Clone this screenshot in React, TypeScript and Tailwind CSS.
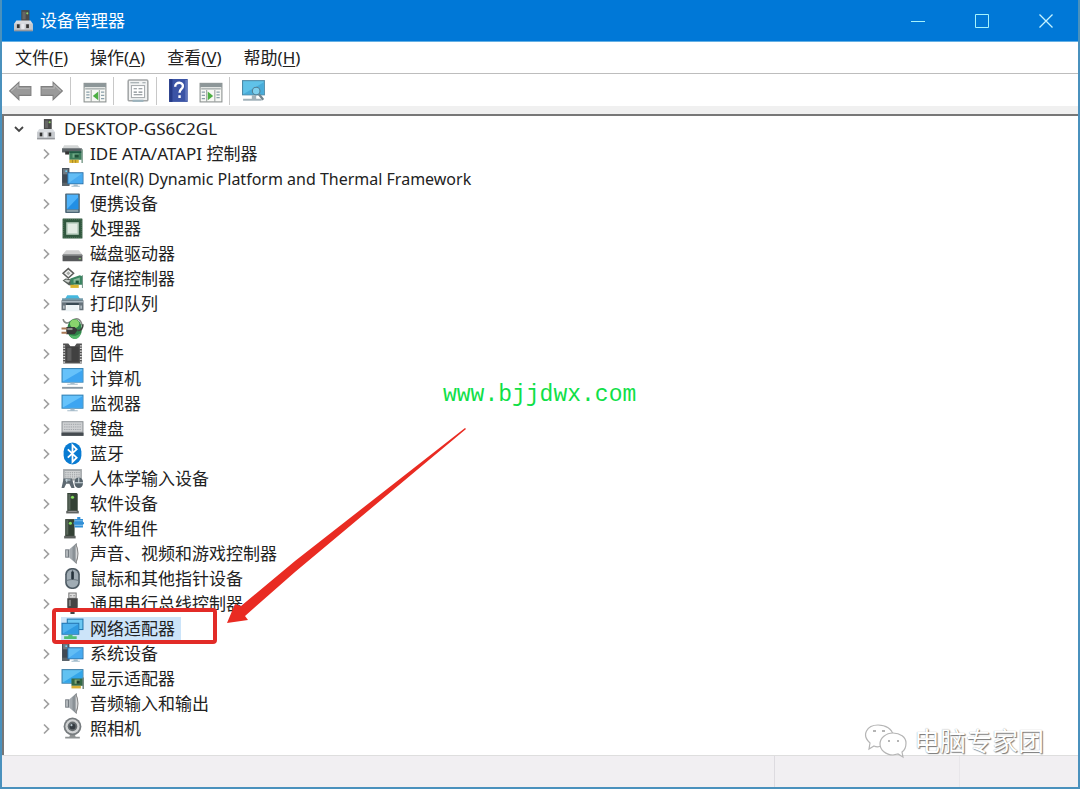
import type { ReactNode } from "react";

type Draw = () => ReactNode;

function Icon({ children, className = "size-[23px]" }: { children: ReactNode; className?: string }) {
  return (
    <svg viewBox="0 0 22 22" aria-hidden="true" className={`${className} shrink-0`}>
      {children}
    </svg>
  );
}

const Pc: Draw = () => (
  <>
    <rect x="8.5" y="1" width="7.5" height="12" fill="#4a4a4a" />
    <rect x="9.5" y="2.5" width="3" height="7" fill="#666" />
    <circle cx="14" cy="4" r="1" fill="#8fd06a" />
    <path d="M4 10.5h13l2 3v6.5H2v-6.5z" fill="#d9dce0" />
    <path d="M2 13.5h17v6.5H2z" fill="#c6c9cd" />
    <path d="M2 19h17v1.5H2z" fill="#97999d" />
    <rect x="4.5" y="14" width="2.5" height="3.5" fill="#333" />
    <rect x="13" y="14" width="2.5" height="3.5" fill="#333" />
    <rect x="8.5" y="13.5" width="3" height="5" fill="#e8eaee" />
  </>
);

const Card: Draw = () => (
  <>
    <path d="M3 3h13l3 4H1z" fill="#d3d6d6" />
    <path d="M1 6h19v4H1z" fill="#5b6266" />
    <path d="M4 9h4v3H4z" fill="#333" />
    <path d="M8 9h12v8H8z" fill="#3d7d5c" />
    <path d="M8 9h12v1.5H8z" fill="#205843" />
    <path d="M11 11h6v4h-6z" fill="#70a987" />
    <path d="M13 12h4v3h-4z" fill="#1f5038" />
    <path d="M8 17h9v3H8z" fill="#d9b22e" />
    <path d="M11 17v3M14 17v3" stroke="#8d7320" strokeWidth=".6" />
    <path d="M19.5 7H21v13h-1.5z" fill="#87a596" />
  </>
);

const Framework: Draw = () => (
  <>
    <rect x="1" y="1" width="7" height="17" fill="#404a54" />
    <rect x="2" y="2" width="5" height="5" fill="#6f7a83" />
    <circle cx="5" cy="4" r=".9" fill="#6ed0f4" />
    <path d="M1 15h7v3H1z" fill="#5b646a" />
    <rect x="6" y="5" width="15.5" height="11.5" fill="#2b6fa8" />
    <rect x="7" y="6" width="13.500" height="9.500" fill="#62bdf5" />
    <path d="M7 15.5 20.5 6v9.5z" fill="#48aaf0" />
    <path d="M12 16.5h4v1.5h2v1h-8v-1h2z" fill="#a3bccb" />
  </>
);

const Portable: Draw = () => (
  <>
    <rect x="4" y="1.5" width="14" height="18.5" rx=".8" fill="#4c6575" />
    <rect x="5.5" y="2.5" width="11" height="14" fill="#4db2fa" />
    <path d="M5.5 16.5 16.5 5v11.5z" fill="#228fe5" />
    <path d="M5.5 17h11v2h-11z" fill="#8ba0aa" />
  </>
);

const Cpu: Draw = () => (
  <>
    <rect x="1.5" y="1.5" width="19" height="19" rx=".5" fill="#31583f" />
    <rect x="2.5" y="2.5" width="17" height="17" fill="none" stroke="#5d8066" strokeWidth=".7" strokeDasharray="1 1" />
    <rect x="5" y="5" width="12" height="12" fill="#b9cfbf" />
    <rect x="6.5" y="6.5" width="9" height="9" fill="#e3ece4" />
  </>
);

const Disk: Draw = () => (
  <>
    <path d="M5 8h12l3.5 4h-19z" fill="#d1d1d1" />
    <rect x="1.5" y="12" width="19" height="6.5" rx=".6" fill="#56585a" />
    <path d="M2 12h18v1.2H2z" fill="#8c8e90" />
    <rect x="17" y="15.5" width="2" height="1" fill="#92d67a" />
  </>
);

const Storage: Draw = () => (
  <>
    <path d="m7 1.5 5 4.5-5 4.5L2 6z" fill="#f4f4f4" stroke="#5d5f5d" strokeWidth="1.5" />
    <path d="m7 4 2 2-2 2-2-2z" fill="#a6aaa6" />
    <path d="m1.500 13 3-2 6 1 2 6-5-.5z" fill="#555d58" />
    <path d="m3 13 2-1 4 1-2 2z" fill="#c8ceca" />
    <path d="M9 11l9-3 3 1v8H9z" fill="#3a8561" />
    <path d="m12 12 6-2v5h-6z" fill="#88b99b" />
    <path d="M14 13h3v3h-3z" fill="#1e563a" />
    <path d="M9 17h8v3H9z" fill="#dbb52f" />
    <path d="M20 8h1v12h-1z" fill="#78998a" />
  </>
);

const Printer: Draw = () => (
  <>
    <path d="M6 3h10l3 5H3z" fill="#45b8df" />
    <path d="M1 6h20v2.500H1z" fill="#7199a8" />
    <path d="M.5 8h21v9.500h-4v-5h-13v5h-4z" fill="#66727a" />
    <path d="M1 8.5h20V10H1z" fill="#a9b7bf" />
    <path d="M5 10.500h12v2H5z" fill="#394a54" />
    <path d="M6 12.500h10l1.500 6h-13z" fill="#edf4f6" />
    <path d="M2 13h1.500v3H2zM18.500 13H20v3h-1.500z" fill="#b7c2c8" />
  </>
);

const Battery: Draw = () => (
  <>
    <path d="M2 2c1 4 4 5 8 2 4-4 9-3 10 4" fill="none" stroke="#858985" strokeWidth="1.5" />
    <ellipse cx="13" cy="11.500" rx="7" ry="9.500" fill="#308449" />
    <ellipse cx="13" cy="6.500" rx="4.500" ry="4" fill="#89d46d" />
    <path d="M8 17c4 2 8 1 11-2-1 4-3 6-6 6-2 0-4-2-5-4z" fill="#55b86a" />
    <path d="M5 9.5h8l3 3-3 4H5z" fill="#373938" />
    <path d="M6 10.5h5v2H6z" fill="#8d908b" />
    <path d="M.5 10h5v2h-5zM.5 14h5v2h-5z" fill="#a97956" />
    <path d="M16 13c4 0 5-3 5-6" fill="none" stroke="#414541" strokeWidth="1.5" />
  </>
);

const Firmware: Draw = () => (
  <>
    <path d="M2 1.5h5l2 2.500h4l2-2.500h5v19H2z" fill="#515151" />
    <path d="M5 4.500h12V19H5z" fill="#414141" />
    <path d="M6 5.500h4V18H6z" fill="#5d5d5d" />
    <path d="M3 3v17M19 3v17" stroke="#ddd" strokeWidth="1.8" strokeDasharray="1.2 1.4" />
  </>
);

const Screen: Draw = () => (
  <>
    <rect x=".5" y="2.5" width="21" height="13.5" fill="#3382b5" />
    <rect x="1.5" y="3.5" width="19" height="11.5" fill="#66c2fa" />
    <path d="M1.5 15 20.5 4v11z" fill="#3da5f1" />
    <path d="M9 16h4v1.5h3v1H6v-1h3z" fill="#a7bdcb" />
  </>
);

const Computer: Draw = () => (
  <>
    <rect x=".5" y="1" width="21" height="14" fill="#3382b5" />
    <rect x="1.5" y="2" width="19" height="12" fill="#66c2fa" />
    <path d="M1.5 14 20.5 3v11z" fill="#3da5f1" />
    <path d="M9 15h4v1h3v1H6v-1h3z" fill="#a7bdcb" />
    <path d="M1 19h20v1.8H1z" fill="#8a9aa5" />
  </>
);

const Keyboard: Draw = () => (
  <>
    <rect x=".5" y="4" width="21" height="14" fill="#8e9397" />
    <rect x="1.5" y="5" width="19" height="9" fill="#cfd1d3" />
    <path d="M3 7h16M3 9.5h16M3 12h16" stroke="#969b9f" strokeWidth=".8" strokeDasharray="1.2 .9" />
    <path d="M.5 15h21v3H.5z" fill="#454b50" />
  </>
);

const Bluetooth: Draw = () => (
  <>
    <rect x="2.500" y=".5" width="17" height="21" rx="8.500" fill="#087bd2" />
    <path d="m6.5 7 8.5 8-4 4V3l4 4-8.5 8" fill="none" stroke="#fff" strokeWidth="1.7" />
  </>
);

const Hid: Draw = () => (
  <>
    <rect x="2" y="2" width="18" height="11" fill="#a2a7aa" />
    <path d="M3.5 4h15v7h-15z" fill="#d8dadb" />
    <path d="M4 5.5h14M4 7.5h14M4 9.5h14" stroke="#868b8e" strokeWidth=".8" strokeDasharray="1.3 .8" />
    <path d="M2.5 11h8L13 20h-3l-2-4H5l-2 4H.5z" fill="#5f6a72" />
    <path d="M4 12.5h5M5.5 11.5v3" stroke="#ccdce4" />
    <rect x="13" y="10" width="8" height="10" rx="4" fill="#57646c" />
    <path d="M17 10v5M13.5 15H21" stroke="#d0dae0" />
  </>
);

const Software: Draw = () => (
  <>
    <path d="M6 1h9l1 1v17H6z" fill="#334135" />
    <path d="M7 2h2v15H7z" fill="#59665a" />
    <circle cx="11" cy="5" r="1.5" fill="#84dd5d" />
    <path d="M5 18h12v2.5H5z" fill="#5e6260" />
    <path d="M7 18h8v1H7z" fill="#999" />
  </>
);

const Component: Draw = () => (
  <>
    <path d="M4 2h9v17H4z" fill="#334135" />
    <path d="M5 3h2v14H5z" fill="#59665a" />
    <circle cx="9" cy="6" r="1.5" fill="#84dd5d" />
    <path d="M3 18h11v2.5H3z" fill="#5e6260" />
    <path d="M13 2h2.500V0h3v2H21v3h1v2h-1v3h-8V7h-1V5h1z" fill="#318fd6" />
    <path d="M13 3.500h8M13 8h8" stroke="#7bbce9" />
  </>
);

const Speaker: Draw = () => (
  <>
    <path d="M4 7h4v8H4z" fill="#737a80" />
    <path d="m8 7 7-6v20l-7-6z" fill="#a3a9ae" />
    <path d="m11 5 4-4v20l-4-4z" fill="#8a9196" />
    <path d="M14 2c3 5 3 13 0 18" fill="#d6d8d9" stroke="#888" />
    <path d="M5 8h1.500v6H5z" fill="#c4c9cc" />
  </>
);

const Mouse: Draw = () => (
  <>
    <rect x="4" y="1" width="14" height="20" rx="6" fill="#4d5a63" />
    <rect x="5.5" y="2.5" width="11" height="17" rx="5" fill="#a0acb4" />
    <path d="M11 2v8M5.5 13q5.5-2 11 0" stroke="#6d7982" fill="none" />
    <rect x="9.8" y="4" width="2.5" height="8" rx="1.2" fill="#26333c" />
  </>
);

const Usb: Draw = () => (
  <>
    <path d="M7.5 1h7v5h-7z" fill="#dedede" stroke="#777" />
    <path d="M9 3h1v1H9zM12 3h1v1h-1z" fill="#555" />
    <path d="M6 6h10v8q0 3-3 4v3H9v-3q-3-1-3-4z" fill="#454545" />
    <path d="M7.5 7.5h2v6h-2z" fill="#818181" />
  </>
);

const Network: Draw = () => (
  <>
    <rect x="5.500" y="1.500" width="16" height="11" fill="#2575ad" />
    <rect x="6.500" y="2.500" width="14" height="9" fill="#6dc8f3" />
    <rect x=".5" y="5.500" width="17" height="11.500" fill="#2677b1" />
    <rect x="1.5" y="6.500" width="15" height="9.500" fill="#4eb1ee" />
    <path d="M1.5 16 16.5 7v9z" fill="#309be1" />
    <path d="M7 17h4v1.500h4V21H3v-2.500h4z" fill="#50bd75" />
  </>
);

const Display: Draw = () => (
  <>
    <rect x=".5" y="2" width="21" height="14" fill="#3a7eaa" />
    <rect x="1.5" y="3" width="19" height="12" fill="#61c2f2" />
    <path d="M1.5 15 20.5 3v12z" fill="#34a6e9" />
    <path d="M10 11h11v7H10z" fill="#346945" />
    <path d="M13 12h5v4h-5z" fill="#82a676" />
    <path d="M15 13h3v3h-3z" fill="#213e2b" />
    <path d="M10 18h9v2.5h-9z" fill="#d7af37" />
    <path d="M20.5 10H22v11h-1.5z" fill="#788c83" />
  </>
);

const Camera: Draw = () => (
  <>
    <path d="M9 16h4l1 3h4v1.5H4V19h4z" fill="#8e9293" />
    <circle cx="11" cy="9" r="8.5" fill="#777c7f" />
    <circle cx="11" cy="9" r="6.8" fill="#d0d2d3" />
    <circle cx="11" cy="9" r="4.6" fill="#676d70" />
    <circle cx="11" cy="9" r="2.8" fill="#353c42" />
    <circle cx="10" cy="7.8" r="1" fill="#b4c3ca" />
  </>
);

const devices: { name: string; draw: Draw; selected?: boolean; long?: boolean }[] = [
  { name: "IDE ATA/ATAPI 控制器", draw: Card },
  { name: "Intel(R) Dynamic Platform and Thermal Framework", draw: Framework, long: true },
  { name: "便携设备", draw: Portable },
  { name: "处理器", draw: Cpu },
  { name: "磁盘驱动器", draw: Disk },
  { name: "存储控制器", draw: Storage },
  { name: "打印队列", draw: Printer },
  { name: "电池", draw: Battery },
  { name: "固件", draw: Firmware },
  { name: "计算机", draw: Computer },
  { name: "监视器", draw: Screen },
  { name: "键盘", draw: Keyboard },
  { name: "蓝牙", draw: Bluetooth },
  { name: "人体学输入设备", draw: Hid },
  { name: "软件设备", draw: Software },
  { name: "软件组件", draw: Component },
  { name: "声音、视频和游戏控制器", draw: Speaker },
  { name: "鼠标和其他指针设备", draw: Mouse },
  { name: "通用串行总线控制器", draw: Usb },
  { name: "网络适配器", draw: Network, selected: true },
  { name: "系统设备", draw: Framework },
  { name: "显示适配器", draw: Display },
  { name: "音频输入和输出", draw: Speaker },
  { name: "照相机", draw: Camera },
];

const menus = [
  { name: "文件", key: "F" },
  { name: "操作", key: "A" },
  { name: "查看", key: "V" },
  { name: "帮助", key: "H" },
];

function Arrow({ flip = false }: { flip?: boolean }) {
  return (
    <Icon className={flip ? "size-6 -scale-x-100" : "size-6"}>
      <path d="M1.5 11 10 3v4h11v8H10v4z" fill="#9a9a9a" stroke="#808080" />
      <path d="M3 11 9 5.5v3h11" fill="none" stroke="#b5b5b5" />
    </Icon>
  );
}

function PaneIcon({ flip = false }: { flip?: boolean }) {
  return (
    <Icon className={flip ? "size-6 -scale-x-100" : "size-6"}>
      <rect x="1" y="4" width="20" height="17" fill="#f7f8f5" stroke="#8d9291" />
      <path d="M1 4h20v3.5H1z" fill="#8d9799" />
      <path d="M2 9h18" stroke="#b1b7b7" strokeWidth="1.5" />
      <path d="M7.5 10v11M15 10v11" stroke="#a0a6a4" />
      <path d="M3 12h3M3 14.5h3M3 17h3M16.5 12h3M16.5 15h3M16.5 18h3" stroke="#8ba0ab" strokeWidth="1.2" />
      <path d="m9 15.5 5-4v8z" fill="#4daf43" />
    </Icon>
  );
}

function Divider() {
  return <span className="h-7 w-px bg-[#c8c8c8]" />;
}

function Chevron({ open = false }: { open?: boolean }) {
  return (
    <svg viewBox="0 0 12 12" aria-hidden="true" className="size-3" fill="none">
      {open ? (
        <path d="m2 4 4 4 4-4" stroke="#454545" strokeWidth="1.8" />
      ) : (
        <path d="m4 1.5 4.5 4.5L4 10.5" stroke="#a0a0a0" strokeWidth="1.7" />
      )}
    </svg>
  );
}

export default function App() {
  return (
    <div className="relative flex min-h-screen flex-col overflow-hidden border-x-2 border-b-2 border-[#4a91bd] bg-white font-['Noto_Sans','Noto_Sans_CJK_SC',sans-serif] text-[17px] leading-6 text-[#222]">
      <header className="flex h-[42px] items-center border-b border-[#65b0e4] bg-[#0078d7] pl-2.5 text-white">
        <Icon className="size-6">{Pc()}</Icon>
        <h1 className="ml-1 flex-1">设备管理器</h1>
        <button type="button" aria-label="最小化" className="grid h-full w-16 place-items-center">
          <svg viewBox="0 0 16 16" className="size-4"><path d="M1 8.5h14" stroke="#a5f3fc" /></svg>
        </button>
        <button type="button" aria-label="最大化" className="grid h-full w-16 place-items-center">
          <svg viewBox="0 0 16 16" className="size-4"><path d="M1.5 1.5h13v13h-13z" fill="none" stroke="#a5f3fc" /></svg>
        </button>
        <button type="button" aria-label="关闭" className="grid h-full w-16 place-items-center">
          <svg viewBox="0 0 16 16" className="size-4"><path d="m1.5 1.5 13 13m0-13-13 13" stroke="#c5f3ff" strokeWidth="1.3" /></svg>
        </button>
      </header>

      <nav className="flex h-8 items-center gap-[22px] border-b border-[#bdbdbd] pl-[13px]">
        {menus.map((menu) => (
          <button type="button" key={menu.key}>
            {menu.name}(<span className="underline decoration-1 underline-offset-2">{menu.key}</span>)
          </button>
        ))}
      </nav>

      <div role="toolbar" aria-label="工具栏" className="flex h-8 items-center pt-0.5 pl-1.5">
        <button type="button" aria-label="后退" className="mr-2"><Arrow /></button>
        <button type="button" aria-label="前进" className="mr-1.5"><Arrow flip /></button>
        <Divider />
        <button type="button" aria-label="显示控制台树" className="mr-1.5 ml-3"><PaneIcon /></button>
        <Divider />
        <button type="button" aria-label="属性" className="mr-1.5 ml-3">
          <Icon className="size-6">
            <rect x="2" y="1" width="18" height="19" rx="1" fill="#f1f2f2" stroke="#a2a5a6" strokeWidth="1.4" />
            <path d="M4 3.5h8M15 3.5h3" stroke="#95a0a4" />
            <rect x="5" y="6" width="12" height="11" fill="#fff" stroke="#a9adb0" />
            <path d="M7 9h3M11.5 9H15M7 12h3M11.5 12H15M7 14.5h8" stroke="#80888d" />
            <path d="M6 20h10" stroke="#9cb3bd" strokeWidth="2" />
          </Icon>
        </button>
        <Divider />
        <button type="button" aria-label="帮助" className="mr-2 ml-2.5">
          <Icon className="size-6">
            <rect x="2" y="0" width="17" height="21" fill="#3b54a5" />
            <path d="M2 0h3v21H2z" fill="#263b87" />
            <path d="M17.5 1v19" stroke="#7589cb" />
            <path d="M7.5 7c0-5 8-4.5 7 0-.5 2.5-3 2.5-3 5.500M11.5 15v2.5" fill="none" stroke="#fff" strokeWidth="2.2" />
          </Icon>
        </button>
        <button type="button" aria-label="显示操作窗格" className="mr-1.5"><PaneIcon flip /></button>
        <Divider />
        <button type="button" aria-label="扫描检测硬件改动" className="ml-3">
          <Icon className="size-6">
            <rect x="0" y="1" width="21" height="14" fill="#4d8aa8" />
            <rect x="1" y="2" width="19" height="12" fill="#60c2e8" />
            <path d="M1 14 20 3v11z" fill="#49acd9" />
            <path d="M9 15h4v3h5v2H1v-2h8z" fill="#a2b2ba" />
            <circle cx="13" cy="11" r="3.5" fill="#7fd0ee" stroke="#527f94" />
            <path d="m15.5 14 4 5" stroke="#71858e" strokeWidth="2" />
          </Icon>
        </button>
      </div>

      <main className="flex flex-1 flex-col border-t-8 border-[#f0f0f0]">
        <div className="flex-1 border-t-2 border-l-2 border-[#777] pt-px">
          <div className="flex h-6 items-center pl-[9px]">
            <Chevron open />
            <span className="ml-2.5"><Icon>{Pc()}</Icon></span>
            <span className="ml-1.5">DESKTOP-GS6C2GL</span>
          </div>
          <ul className="pl-9">
            {devices.map((device) => (
              <li key={device.name} className="relative flex h-[25px] items-center">
                <Chevron />
                <div className={device.selected ? "ml-[9px] flex h-6 items-center bg-[#cce4f9] pr-1.5" : "ml-[9px] flex h-6 items-center"}>
                  <Icon>{device.draw()}</Icon>
                  <span className={device.long ? "ml-1.5 text-base whitespace-nowrap" : "ml-1.5 whitespace-nowrap"}>{device.name}</span>
                </div>
                {device.selected && (
                  <span className="absolute -top-2 left-3 z-10 h-9 w-[165px] rounded-sm border-4 border-[#e22b27]" />
                )}
              </li>
            ))}
          </ul>
        </div>
      </main>

      <footer className="flex h-8 border-t border-[#dedede] bg-[#f1eff2]">
        <span className="flex-1" />
        <span className="w-[185px] border-l border-[#dddbe0]" />
        <span className="w-[119px] border-l border-[#e8e6ea]" />
      </footer>

      <svg viewBox="0 0 242 198" aria-hidden="true" className="pointer-events-none absolute top-[427px] left-[222px] h-[198px] w-[242px]">
        <path d="M241 1 71 134 17 179 11 177 3 196 24 193 21 189 71 145 242 2Z" fill="#e92b22" />
      </svg>
      <p className="absolute top-[379px] left-[441px] font-['Liberation_Mono',monospace] text-[23px] leading-8 text-[#10df48]">www.bjjdwx.com</p>
      <div className="absolute right-[34px] bottom-7 flex items-center gap-1.5 text-[26px] leading-9">
        <svg viewBox="0 0 44 36" aria-hidden="true" className="h-9 w-11" fill="#fff" stroke="#b5b5b5" strokeWidth="1.2">
          <path d="M18 23c-3 1-6 1-8 0l-5 3 1-6C-3 12 3 2 14 2c8 0 14 4 15 10" />
          <path d="M42 20c0-6-6-10-13-10s-13 5-13 11 6 11 13 11l5-1 5 3-1-5c3-2 4-5 4-9z" />
          <path d="M9 8h3M18 8h3M24 18h2M33 18h2" strokeWidth="2" />
        </svg>
        <span className="text-white [text-shadow:1px_1px_1px_#777,0_0_1px_#999]">电脑专家团</span>
      </div>
    </div>
  );
}
